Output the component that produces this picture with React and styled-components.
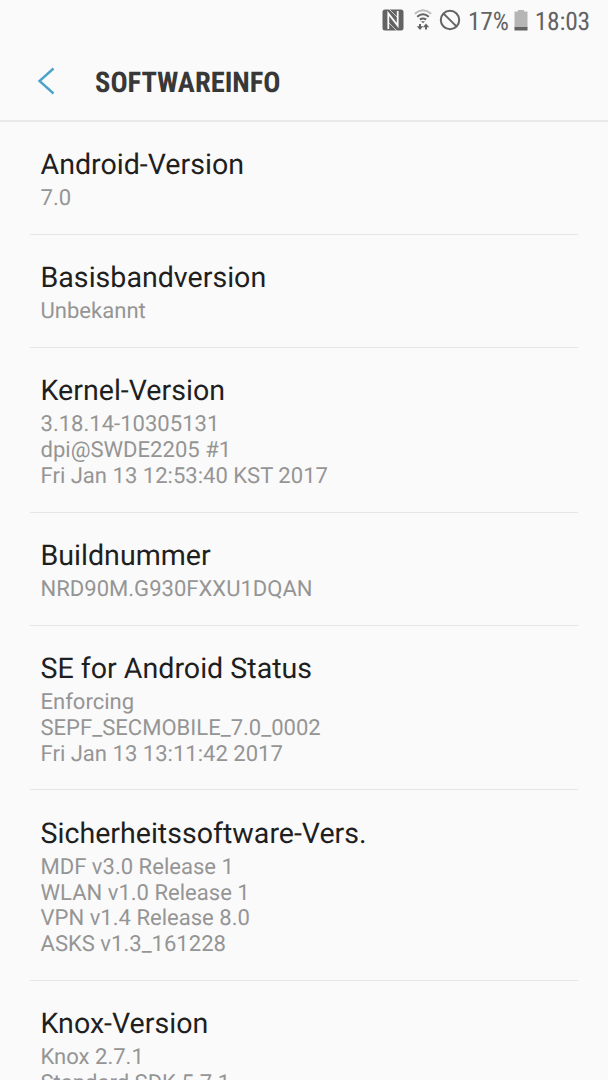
import styled, { createGlobalStyle } from "styled-components";

const infos = [
  { titulo: "Android-Version", linhas: ["7.0"] },
  { titulo: "Basisbandversion", linhas: ["Unbekannt"] },
  {
    titulo: "Kernel-Version",
    linhas: ["3.18.14-10305131", "dpi@SWDE2205 #1", "Fri Jan 13 12:53:40 KST 2017"],
  },
  { titulo: "Buildnummer", linhas: ["NRD90M.G930FXXU1DQAN"] },
  {
    titulo: "SE for Android Status",
    linhas: ["Enforcing", "SEPF_SECMOBILE_7.0_0002", "Fri Jan 13 13:11:42 2017"],
  },
  {
    titulo: "Sicherheitssoftware-Vers.",
    linhas: ["MDF v3.0 Release 1", "WLAN v1.0 Release 1", "VPN v1.4 Release 8.0", "ASKS v1.3_161228"],
  },
  { titulo: "Knox-Version", linhas: ["Knox 2.7.1", "Standard SDK 5.7.1"] },
];

const NfcIcon = () => (
  <svg width="22" height="22" viewBox="0 0 22 22">
    <rect x=".5" y=".5" width="21" height="21" rx="2.5" fill="#636363" />
    <path d="M6.3 20V4.5L15.7 16.6V2" fill="none" stroke="#fafafa" strokeWidth="1.8" />
    <path d="M7 0L15.5 8.5M6.5 13.5L15 22" stroke="#fafafa" strokeWidth=".7" />
  </svg>
);

const WifiIcon = () => (
  <svg width="18" height="22" viewBox="0 0 18 22" fill="none">
    <path d="M.8 4.7Q9-2.2 17.2 4.7" stroke="#bcbcbc" strokeWidth="1.9" />
    <path d="M3.2 7.7Q9 2.8 14.8 7.7M5.9 10.7Q9 8.3 12.1 10.7" stroke="#636363" strokeWidth="2.1" />
    <path d="M7 12.2H11L9 14.2Z" fill="#636363" />
    <path d="M6 15V19M12 20.5V17" stroke="#636363" strokeWidth="2" />
    <path d="M2.8 17.3H9.2L6 21ZM8.8 18.2H15.2L12 14.5Z" fill="#636363" />
  </svg>
);

const BlockIcon = () => (
  <svg width="22" height="22" viewBox="0 0 22 22" fill="none" stroke="#636363" strokeWidth="2">
    <circle cx="11" cy="11" r="9.2" />
    <path d="M4.6 4.6L17.4 17.4" />
  </svg>
);

const BatteryIcon = () => (
  <svg width="14" height="21" viewBox="0 0 14 21">
    <path d="M4 0H10V1.5H13.5V18H.5V1.5H4Z" fill="#b5b5b5" />
    <path d="M.5 17H13.5V20.5H.5Z" fill="#636363" />
  </svg>
);

const App = () => {
  return (
    <Main>
      <GlobalStyle />
      <StatusBar>
        <NfcIcon />
        <WifiIcon />
        <BlockIcon />
        <Bateria>17%</Bateria>
        <BatteryIcon />
        <Hora>18:03</Hora>
      </StatusBar>
      <Header>
        <Voltar aria-label="Zurück">
          <svg width="18" height="28" viewBox="0 0 18 28" fill="none" stroke="#4da3c7" strokeWidth="2.4">
            <path d="M16.5 1.5L2.5 14L16.5 26.5" />
          </svg>
        </Voltar>
        <Titulo>SOFTWAREINFO</Titulo>
      </Header>
      <Lista>
        {infos.map((info) => (
          <Item key={info.titulo}>
            <h2>{info.titulo}</h2>
            {info.linhas.map((linha) => (
              <p key={linha}>{linha}</p>
            ))}
          </Item>
        ))}
      </Lista>
    </Main>
  );
};
export default App;

const GlobalStyle = createGlobalStyle`
  *{
    box-sizing: border-box;
    margin: 0;
    padding: 0;
  }
  body{
    background-color: #fafafa;
    overflow: hidden;
  }
`
const Main = styled.main`
  height: 1080px;
  overflow: hidden;
  background-color: #fafafa;
  font-family: Roboto, sans-serif;
  text-rendering: geometricPrecision;
`
const StatusBar = styled.div`
  display: flex;
  align-items: center;
  justify-content: flex-end;
  height: 40px;
  padding-right: 18px;
  color: #636363;
  font-family: "Roboto Condensed", Roboto, sans-serif;
  font-size: 25.5px;
  letter-spacing: -0.2px;
  svg{
    flex-shrink: 0;
  }
  svg + svg{
    margin-left: 10px;
  }
  svg + svg + svg{
    margin-left: 7px;
  }
`
const Bateria = styled.span`
  margin-left: 7px;
  margin-right: 5px;
  padding-top: 3px;
`
const Hora = styled.span`
  margin-left: 7px;
  padding-top: 3px;
`
const Header = styled.header`
  display: flex;
  align-items: center;
  height: 82px;
  padding-top: 2px;
  padding-left: 37px;
  border-bottom: 2px solid #e9e9e9;
`
const Voltar = styled.button`
  display: flex;
  width: 58px;
  border: none;
  background: none;
`
const Titulo = styled.h1`
  padding-top: 4px;
  color: #383838;
  font-family: "Roboto Condensed", Roboto, sans-serif;
  font-size: 28.5px;
  font-weight: 700;
  line-height: 34px;
`
const Lista = styled.section`
  padding: 0 30px;
`
const Item = styled.div`
  padding: 25.4px 10.5px 21.7px;
  border-bottom: 1px solid #e6e6e6;
  h2{
    margin-bottom: 5px;
    color: #1f1f1f;
    font-size: 28.6px;
    font-weight: 400;
    line-height: 34px;
  }
  p{
    color: #959595;
    font-size: 22.05px;
    line-height: 25.87px;
    white-space: nowrap;
  }
`
